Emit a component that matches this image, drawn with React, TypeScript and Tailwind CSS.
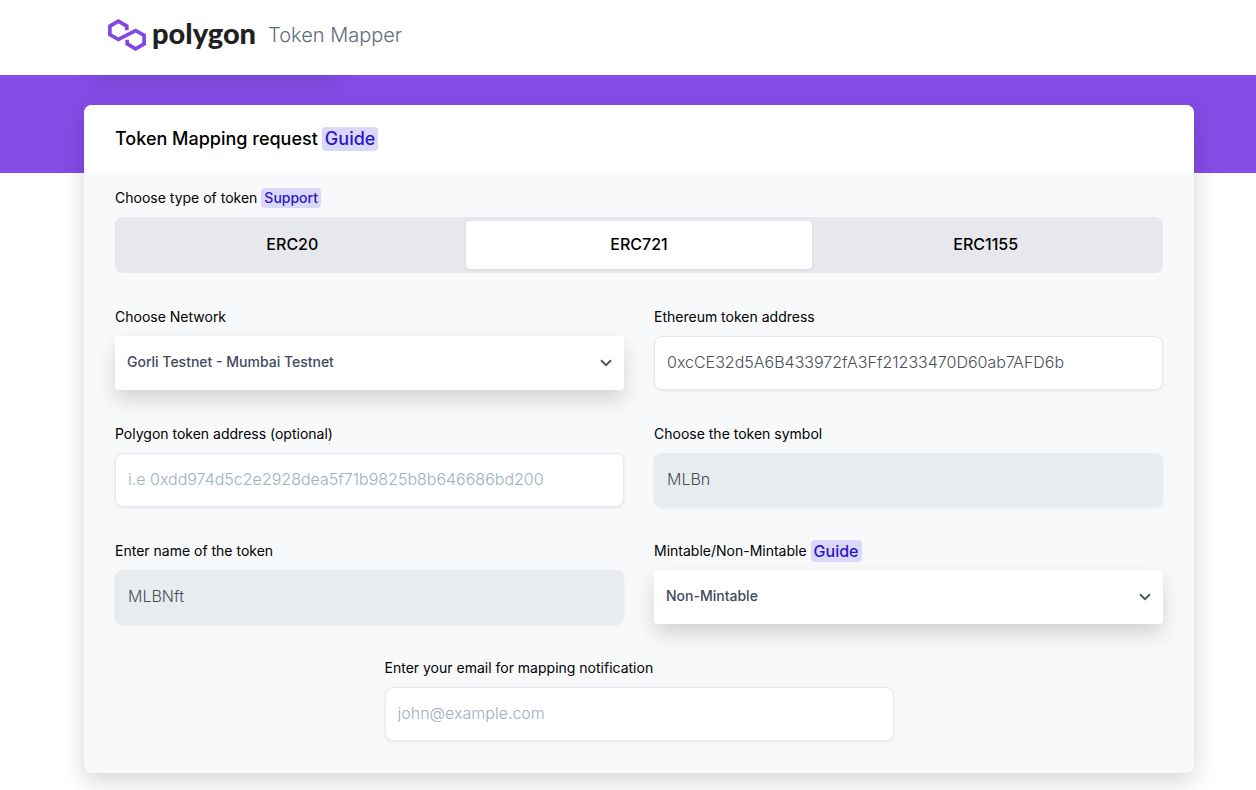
import { useState } from "react";
import type { ReactNode } from "react";

const tokenTypes = ["ERC20", "ERC721", "ERC1155"];

function Logo() {
  return (
    <svg width="38" height="32" viewBox="0 0 38 32" fill="none" stroke="#8247e5" strokeWidth="3.7" strokeLinejoin="miter" aria-hidden="true">
      <path d="M18.800 11.200V7.100L10.400 2.200L1.900 7.100v8.500l8.500 4.900L27.600 11.500l8.500 4.900v8.500l-8.500 4.900L19.200 24.900v-4.100" />
    </svg>
  );
}

function Chevron() {
  return (
    <svg className="pointer-events-none absolute right-3 top-1/2 -translate-y-1/2" width="12" height="8" viewBox="0 0 12 8" fill="none" stroke="#4a5568" strokeWidth="2" aria-hidden="true">
      <path d="M1 1.200l5 5l5-5" />
    </svg>
  );
}

function Tag({ children, className }: { children: ReactNode; className: string }) {
  return (
    <a href="#guide" className={`rounded bg-[#dbd7fb] px-[3px] text-[#2c17c5] ${className}`}>
      {children}
    </a>
  );
}

function Field({ id, label, tag, children }: { id: string; label: string; tag?: ReactNode; children: ReactNode }) {
  return (
    <div>
      <div className="mb-2 flex items-center gap-1 text-sm leading-[22px]">
        <label htmlFor={id}>{label}</label>
        {tag}
      </div>
      {children}
    </div>
  );
}

const inputClass =
  "block h-[54px] w-full rounded-lg border border-[#e7e8ed] bg-white px-3 pb-0.5 text-base font-light text-[#495057] shadow-[0_1px_3px_rgba(0,0,0,0.08)] outline-none placeholder:text-[#a0aec0] disabled:border-[#e9ecef] disabled:bg-[#e9ecef]";

function Select({ id, option }: { id: string; option: string }) {
  return (
    <div className="relative">
      <select id={id} className="block h-[54px] w-full appearance-none rounded bg-white px-3 pb-0.5 text-sm font-medium text-[#3f4a5e] shadow-[0_10px_20px_rgba(0,0,0,0.15)] outline-none">
        <option>{option}</option>
      </select>
      <Chevron />
    </div>
  );
}

export default function App() {
  const [type, setType] = useState("ERC721");
  return (
    <div className="min-h-screen bg-white font-['Inter',sans-serif] text-black">
      <header className="flex h-[75px] items-start pl-[108px] pt-[19px]">
        <a href="#home" className="flex items-start">
          <Logo />
          <span className="ml-1.5 font-['Lato',sans-serif] text-[29px] font-black leading-[27px] text-[#212121]">polygon</span>
          <span className="ml-3 text-xl font-light leading-8 text-[#5f6c7b]">Token Mapper</span>
        </a>
      </header>
      <div className="h-[98px] overflow-hidden bg-[#854ce6]">
        <div className="ml-[100px] h-0 w-[232px] shadow-[0_0_20px_8px_rgba(0,0,0,0.12)]" />
      </div>
      <main className="-mt-[68px] pb-4 pl-[84px] pr-[62px]">
        <form className="relative rounded-lg bg-[#f8f9fb] shadow-[0_8px_24px_rgba(0,0,0,0.17)]">
          <div className="flex h-[68px] items-center gap-1 rounded-t-lg bg-white px-[31px]">
            <h1 className="text-lg font-medium">Token Mapping request</h1>
            <Tag className="text-lg font-medium leading-6">Guide</Tag>
          </div>
          <div className="px-[31px] pb-8 pt-3.5">
            <div className="mb-2 flex items-center gap-1 text-sm leading-[22px]">
              <span id="type-label">Choose type of token</span>
              <Tag className="text-sm font-medium leading-5">Support</Tag>
            </div>
            <div role="group" aria-labelledby="type-label" className="grid h-14 grid-cols-3 rounded-lg bg-[#e7e8ed] p-1">
              {tokenTypes.map((t) => (
                <button
                  key={t}
                  type="button"
                  aria-pressed={t === type}
                  onClick={() => setType(t)}
                  className={t === type ? "rounded bg-white pb-0.5 font-medium shadow-[0_1px_3px_rgba(0,0,0,0.08)]" : "rounded pb-0.5 font-medium"}
                >
                  {t}
                </button>
              ))}
            </div>
            <div className="mt-[33px] grid grid-cols-2 gap-x-[30px] gap-y-[33px]">
              <Field id="network" label="Choose Network">
                <Select id="network" option="Gorli Testnet - Mumbai Testnet" />
              </Field>
              <Field id="ethereum" label="Ethereum token address">
                <input id="ethereum" className={inputClass} defaultValue="0xcCE32d5A6B433972fA3Ff21233470D60ab7AFD6b" />
              </Field>
              <Field id="polygon" label="Polygon token address (optional)">
                <input id="polygon" className={inputClass} placeholder="i.e 0xdd974d5c2e2928dea5f71b9825b8b646686bd200" />
              </Field>
              <Field id="symbol" label="Choose the token symbol">
                <input id="symbol" className={inputClass} defaultValue="MLBn" disabled />
              </Field>
              <Field id="name" label="Enter name of the token">
                <input id="name" className={inputClass} defaultValue="MLBNft" disabled />
              </Field>
              <Field id="mintable" label="Mintable/Non-Mintable" tag={<Tag className="text-base font-medium leading-[22px]">Guide</Tag>}>
                <Select id="mintable" option="Non-Mintable" />
              </Field>
              <div className="col-span-2 grid grid-cols-[1fr_2fr_1fr] gap-x-[15px]">
                <div className="col-start-2">
                  <Field id="email" label="Enter your email for mapping notification">
                    <input id="email" type="email" className={inputClass} placeholder="john@example.com" />
                  </Field>
                </div>
              </div>
            </div>
          </div>
        </form>
      </main>
    </div>
  );
}
